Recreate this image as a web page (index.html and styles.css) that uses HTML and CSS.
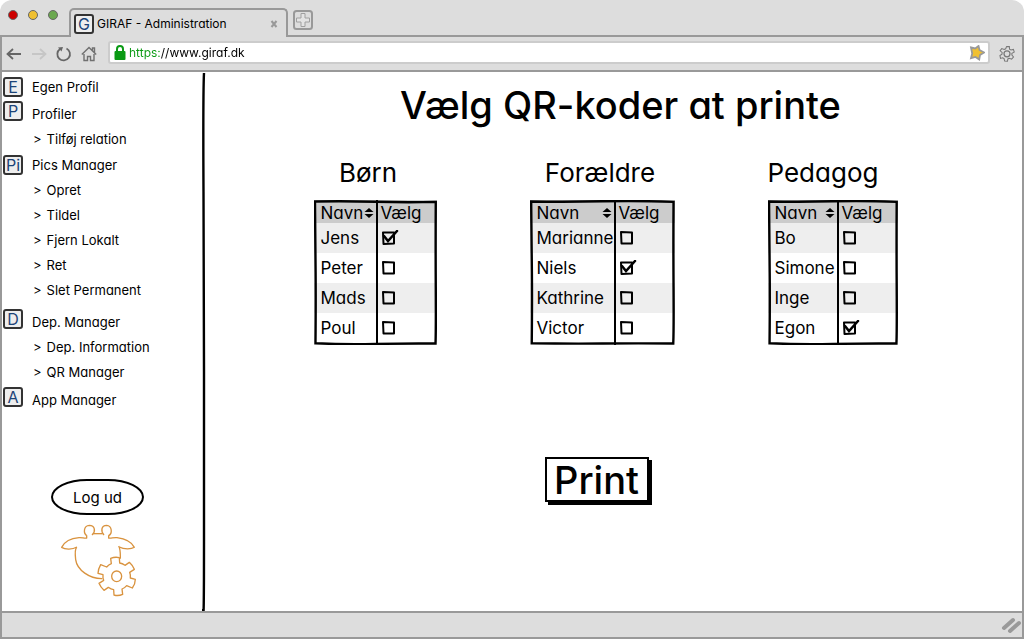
FILE: index.html
```html
<!DOCTYPE html>
<html lang="da">
<head>
<meta charset="utf-8">
<meta name="viewport" content="width=device-width, initial-scale=1">
<title>GIRAF - Administration</title>
<link rel="stylesheet" href="styles.css">
</head>
<body>
<div class="window">
  <header class="tabstrip">
    <div class="lights"><i class="light red"></i><i class="light yellow"></i><i class="light green"></i></div>
    <div class="tab">
      <span class="badge">G</span>
      <span class="tab-title">GIRAF - Administration</span>
      <button class="tab-close" type="button" aria-label="Luk fane"><svg width="8" height="8" viewBox="0 0 8 8"><path d="M1.5 1 6.5 7M6.5 1 1.5 7" fill="none" stroke="#999" stroke-width="2"/></svg></button>
    </div>
    <button class="new-tab" type="button" aria-label="Ny fane"><svg width="20" height="20" viewBox="0 0 20 20"><rect x="1" y="1" width="18" height="18" rx="2.5" fill="none" stroke="#999" stroke-width="2"/><path d="M8 3.5h4v4.500h4.500v4h-4.500v4.500h-4v-4.500h-4.500v-4h4.500z" fill="#e4e4e4" stroke="#a0a0a0"/></svg></button>
  </header>
  <div class="toolbar">
    <button class="tool" type="button" aria-label="Tilbage"><svg width="16" height="14" viewBox="0 0 16 14"><path d="M15 7H2M7 2 1.500 7 7 12" fill="none" stroke="#666" stroke-width="1.800"/></svg></button>
    <button class="tool" type="button" aria-label="Frem"><svg width="16" height="14" viewBox="0 0 16 14"><path d="M1 7h13M9 2l5.500 5L9 12" fill="none" stroke="#c6c6c6" stroke-width="1.800"/></svg></button>
    <button class="tool" type="button" aria-label="Genindlæs"><svg width="16" height="16" viewBox="0 0 16 16"><path d="M10.500 2.500A6.300 6.300 0 1 1 4 3" fill="none" stroke="#666" stroke-width="1.800"/><path d="M2 1.500 7 1 5.500 5.500z" fill="#666"/></svg></button>
    <button class="tool" type="button" aria-label="Hjem"><svg width="16" height="16" viewBox="0 0 16 16"><path d="M.8 8.500 8 1.500l7.200 7M11.500 4.500V2h2v4.500M3 8v6.500h3.500v-4h3v4H13V8" fill="none" stroke="#707070" stroke-width="1.400"/></svg></button>
    <div class="address">
      <svg width="12" height="15" viewBox="0 0 12 15"><path d="M3 8V4a3 3 0 0 1 6 0V8" fill="none" stroke="#0a9a14" stroke-width="2"/><rect x=".5" y="6" width="11" height="9" rx="1" fill="#0a9a14"/></svg>
      <input class="url" type="text" aria-label="Adresse" value="https://www.giraf.dk">
      <svg width="16" height="16" viewBox="0 0 16 16"><path d="M2 2.500 6.200 3.500 9.500 1l1 4 4.500 2.500-4 2.500-.8 4.500L6.500 12l-4.500 1.200 1.200-4.700z" fill="#f0c030" stroke="#999" stroke-width="1.800"/></svg>
    </div>
    <button class="tool" type="button" aria-label="Indstillinger"><svg width="16" height="17" viewBox="0 0 17 17"><path d="M8 1.200 11 1l.2 3 1.500.8 2.600-.6.9 2.800-2.500 1.400v1.800l1.700 2-2 2.300-2.500-1-1.500.8-.4 2.500-3-.2-.6-2.600-1.500-.9-2.300.6L1 10.700l2.200-1.400.1-1.900L1.200 5.600l1.700-2.300 2.600 1 1.600-.8z" fill="none" stroke="#777" stroke-width="1.100"/><circle cx="8.500" cy="8.800" r="3.200" fill="none" stroke="#777" stroke-width="1.300"/></svg></button>
  </div>

  <div class="page">
    <aside class="sidebar">
      <nav>
        <ul class="menu">
          <li class="head"><span class="badge">E</span><a href="#">Egen Profil</a></li>
          <li class="head raised near"><span class="badge">P</span><a href="#">Profiler</a></li>
          <li class="sub"><span>&gt;</span><a href="#">Tilføj relation</a></li>
          <li class="head"><span class="badge">Pi</span><a href="#">Pics Manager</a></li>
          <li class="sub"><span>&gt;</span><a href="#">Opret</a></li>
          <li class="sub"><span>&gt;</span><a href="#">Tildel</a></li>
          <li class="sub"><span>&gt;</span><a href="#">Fjern Lokalt</a></li>
          <li class="sub"><span>&gt;</span><a href="#">Ret</a></li>
          <li class="sub"><span>&gt;</span><a href="#">Slet Permanent</a></li>
          <li class="head raised spaced"><span class="badge">D</span><a href="#">Dep. Manager</a></li>
          <li class="sub"><span>&gt;</span><a href="#">Dep. Information</a></li>
          <li class="sub"><span>&gt;</span><a href="#">QR Manager</a></li>
          <li class="head raised apart"><span class="badge">A</span><a href="#">App Manager</a></li>
        </ul>
      </nav>
      <button class="logout" type="button">Log ud</button>
      <svg class="logo" width="88" height="80" viewBox="0 0 264 240" fill="none" stroke="#d9933f" stroke-width="4" stroke-linejoin="round" role="img" aria-label="GIRAF">
        <path d="M112 41h27"/>
        <path d="M92 47c-10-7-10-30 8-31 17 0 20 18 8 29M158 47c12-7 10-30-6-31-17 0-18 18-8 29"/>
        <path d="M92 46v8c-7 2-13-2-23-1-24 2-44 13-52 29 9 6 31 8 46-1M158 46v8c7 2 13-2 25-1 24 3 44 13 52 29-8 6-31 7-45-1"/>
        <path d="M62 82c-5 5-5 20-3 37 4 31 42 58 80 57M188 78c6 10 5 22 5 38"/>
        <path d="M166 131 164 115Q177 110 190 113L191 129Q199 130 207 136L220 127Q230 136 235 148L221 157Q224 165 223 174L238 178Q238 192 229 204L212 197Q206 204 198 207L200 223Q187 229 174 225L173 209Q165 208 157 202L144 211Q134 202 129 190L143 181Q140 173 141 164L126 160Q127 146 134 134L152 141Q158 134 166 131z"/>
        <ellipse cx="182" cy="169" rx="15" ry="16"/>
      </svg>
      <svg class="divider" viewBox="0 0 4 540" preserveAspectRatio="none" aria-hidden="true"><path d="M2 1Q1 20 1.500 120T2 300T2 470T1 538" fill="none" stroke="#000" stroke-width="2.400"/></svg>
    </aside>

    <main class="content">
      <h1>Vælg QR-koder at printe</h1>
      <div class="groups">
        <section class="group children">
          <h2>Børn</h2>
          <div class="frame">
            <table>
              <thead><tr><th><div class="sort">Navn<svg width="10" height="10" viewBox="0 0 10 10"><path d="M.5 4 5 0l4.500 4zM.5 6h9L5 10z"/></svg></div></th><th>Vælg</th></tr></thead>
              <tbody>
                <tr><td><label for="b1">Jens</label></td><td><input id="b1" type="checkbox" checked></td></tr>
                <tr><td><label for="b2">Peter</label></td><td><input id="b2" type="checkbox"></td></tr>
                <tr><td><label for="b3">Mads</label></td><td><input id="b3" type="checkbox"></td></tr>
                <tr><td><label for="b4">Poul</label></td><td><input id="b4" type="checkbox"></td></tr>
              </tbody>
            </table>
            <svg class="outline" viewBox="0 0 100 100" preserveAspectRatio="none" aria-hidden="true"><path d="M.8 1Q25 .6 50 1.200T99 1.300Q98.800 30 99 60T98.800 99Q75 98.800 50 99.300T1.200 98.800Q1.500 70 1.300 50T.8 1z"/></svg>
          </div>
        </section>
        <section class="group parents">
          <h2>Forældre</h2>
          <div class="frame">
            <table>
              <thead><tr><th><div class="sort">Navn<svg width="10" height="10" viewBox="0 0 10 10"><path d="M.5 4 5 0l4.500 4zM.5 6h9L5 10z"/></svg></div></th><th>Vælg</th></tr></thead>
              <tbody>
                <tr><td><label for="f1">Marianne</label></td><td><input id="f1" type="checkbox"></td></tr>
                <tr><td><label for="f2">Niels</label></td><td><input id="f2" type="checkbox" checked></td></tr>
                <tr><td><label for="f3">Kathrine</label></td><td><input id="f3" type="checkbox"></td></tr>
                <tr><td><label for="f4">Victor</label></td><td><input id="f4" type="checkbox"></td></tr>
              </tbody>
            </table>
            <svg class="outline" viewBox="0 0 100 100" preserveAspectRatio="none" aria-hidden="true"><path d="M.8 1Q25 1.400 50 .9T99 1.300Q98.800 30 99 60T98.800 99Q75 98.800 50 99T1.200 98.800Q1.500 70 1.300 50T.8 1z"/></svg>
          </div>
        </section>
        <section class="group teachers">
          <h2>Pedagog</h2>
          <div class="frame">
            <table>
              <thead><tr><th><div class="sort">Navn<svg width="10" height="10" viewBox="0 0 10 10"><path d="M.5 4 5 0l4.500 4zM.5 6h9L5 10z"/></svg></div></th><th>Vælg</th></tr></thead>
              <tbody>
                <tr><td><label for="p1">Bo</label></td><td><input id="p1" type="checkbox"></td></tr>
                <tr><td><label for="p2">Simone</label></td><td><input id="p2" type="checkbox"></td></tr>
                <tr><td><label for="p3">Inge</label></td><td><input id="p3" type="checkbox"></td></tr>
                <tr><td><label for="p4">Egon</label></td><td><input id="p4" type="checkbox" checked></td></tr>
              </tbody>
            </table>
            <svg class="outline" viewBox="0 0 100 100" preserveAspectRatio="none" aria-hidden="true"><path d="M.8 1Q25 1.400 50 .9T99 1.300Q98.800 30 99 60T98.800 99Q75 98.800 50 99.300T1.200 98.800Q1.500 70 1.300 50T.8 1z"/></svg>
          </div>
        </section>
      </div>
      <div class="actions"><button class="print" type="button">Print</button></div>
    </main>
  </div>

  <footer class="status"><svg width="20" height="18" viewBox="0 0 20 18"><path d="M3 12 12 4M9 15l9-8" stroke="#999" stroke-width="4" stroke-linecap="round"/></svg></footer>
</div>
</body>
</html>
```
FILE: styles.css
```css
* { box-sizing: border-box; }

body {
  margin: 0;
  background: #fff;
  color: #000;
  font-family: Inter, "Liberation Sans", sans-serif;
  font-feature-settings: "cv11";
  font-size: 13px;
}

button {
  margin: 0;
  padding: 0;
  border: 0;
  background: none;
  color: inherit;
  font: inherit;
  font-feature-settings: inherit;
  cursor: pointer;
}

svg { display: block; }
a { color: inherit; text-decoration: none; }

.window {
  display: flex;
  flex-direction: column;
  min-height: 100vh;
  border-radius: 12px 12px 0 0;
  background: #ddd;
}

.tabstrip {
  display: flex;
  align-items: flex-start;
  height: 37px;
  border-bottom: 2px solid #999;
}

.lights { display: flex; gap: 10px; padding: 10px 11px 0 8px; }
.light { width: 10px; height: 10px; border: 1px solid #666; border-radius: 50%; }
.red { background: #c00; }
.yellow { background: #f0c030; }
.green { background: #6aa84f; }

.tab {
  display: flex;
  align-items: center;
  width: 219px;
  height: 29px;
  margin-top: 8px;
  padding: 0 8px 0 3px;
  border: 2px solid #999;
  border-bottom: 0;
  border-radius: 5px 5px 0 0;
  background: #ddd;
}
.tab-title { flex: 1; padding-left: 3px; font-size: 12px; white-space: nowrap; }
.new-tab { margin: 10px 0 0 5px; }

.badge {
  flex: none;
  width: 20px;
  height: 20px;
  border: 2px solid #333;
  border-radius: 3px;
  background: #eee;
  color: #1c4478;
  font-size: 16px;
  line-height: 16px;
  text-align: center;
}

.toolbar {
  display: flex;
  align-items: center;
  gap: 9px;
  height: 35px;
  padding: 0 7px 0 4px;
  border: solid #999;
  border-width: 0 2px 2px;
}

.address {
  display: flex;
  flex: 1;
  align-items: center;
  gap: 3px;
  height: 23px;
  margin: 0 0 2px 2px;
  padding: 0 3px 0 4px;
  border: 2px solid #ccc;
  border-radius: 3px;
  background: #fff;
}
.url {
  flex: 1;
  min-width: 0;
  padding: 0;
  border: 0;
  outline: 0;
  background: linear-gradient(to right, #0a9a14 32px, #000 32px);
  background-clip: text;
  color: transparent;
  font: inherit;
  font-size: 12px;
  font-feature-settings: inherit;
}

.page {
  display: flex;
  flex: 1;
  border: solid #999;
  border-width: 0 2px;
  background: #fff;
}

.sidebar { position: relative; flex: none; width: 205px; padding: 2px 0 0 1px; }
.divider { position: absolute; top: 0; right: 1px; width: 4px; height: 100%; }

.menu { margin: 0; padding: 0; list-style: none; }
.head { display: flex; align-items: center; gap: 9px; height: 26px; line-height: 26px; }
.raised { align-items: flex-start; }
.near { margin-top: 1px; }
.apart { margin-top: 2px; }
.spaced { margin-top: 6px; }
.sub { display: flex; gap: 5px; height: 25px; padding-left: 30px; line-height: 25px; }

.logout {
  display: block;
  width: 93px;
  height: 36px;
  margin: 66px 0 0 48px;
  border: 2px solid #000;
  border-radius: 36px / 18px;
  background: #fff;
  font-size: 15px;
}
.logo { margin: 5px 0 0 53px; }

.content { flex: 1; padding: 11px 0 60px; }

h1, h2 { margin: 0; font-weight: 400; }
h1 { padding-left: 12px; font-size: 38px; font-weight: 500; line-height: 44px; text-align: center; }

.groups { display: flex; justify-content: center; gap: 93px; padding: 28px 18px 0 0; }
.children { width: 123px; }
.parents { width: 145px; }
.teachers { width: 130px; }
h2 { margin-bottom: 9px; font-size: 26px; line-height: 36px; text-align: center; }
.children h2 { padding-right: 14px; }
.parents h2 { padding-right: 4px; }
.teachers h2 { text-align: left; }

.frame { position: relative; }
.outline { position: absolute; inset: 0; width: 100%; height: 100%; pointer-events: none; }
.outline path { fill: none; stroke: #000; stroke-width: 2.4px; vector-effect: non-scaling-stroke; }

table { width: 100%; table-layout: fixed; border-collapse: collapse; font-size: 17px; line-height: 20px; }
th { height: 23px; padding: 2px 2px 0 7px; background: #ccc; font-weight: 400; text-align: left; }
td { height: 30px; padding: 0 0 0 7px; white-space: nowrap; }
th:last-child, td:last-child { width: 60px; padding-left: 3px; border-left: 2px solid #000; }
tbody tr:nth-child(odd) { background: #eee; }
tbody tr:last-child td { height: 32px; padding-bottom: 2px; }
.sort { display: flex; align-items: center; justify-content: space-between; }

input[type="checkbox"] {
  display: block;
  width: 18px;
  height: 16px;
  margin: 0;
  appearance: none;
  background: url("data:image/svg+xml,%3Csvg xmlns='http://www.w3.org/2000/svg' viewBox='0 0 18 16'%3E%3Cpath d='M2 2 13 2.500 13 13.500 2.500 13.500z' fill='none' stroke='%23000' stroke-width='2' stroke-linejoin='round'/%3E%3C/svg%3E");
}
input[type="checkbox"]:checked {
  background: url("data:image/svg+xml,%3Csvg xmlns='http://www.w3.org/2000/svg' viewBox='0 0 18 16'%3E%3Cpath d='M2 2.500 13 2.500 13 13.500 2.500 14z' fill='none' stroke='%23000' stroke-width='2' stroke-linejoin='round'/%3E%3Cpath d='M3 6 7 11 16 1' fill='none' stroke='%23000' stroke-width='2.500' stroke-linecap='round'/%3E%3C/svg%3E");
}

.actions { display: flex; justify-content: center; padding: 112px 36px 0 0; }
.print {
  width: 104px;
  height: 45px;
  border: 2px solid #000;
  background: #fff;
  box-shadow: 3px 3px 0 #000;
  font-size: 38px;
  font-weight: 500;
  line-height: 40px;
}

.status {
  display: flex;
  align-items: center;
  justify-content: flex-end;
  height: 28px;
  padding-right: 1px;
  border: 2px solid #999;
}
```
